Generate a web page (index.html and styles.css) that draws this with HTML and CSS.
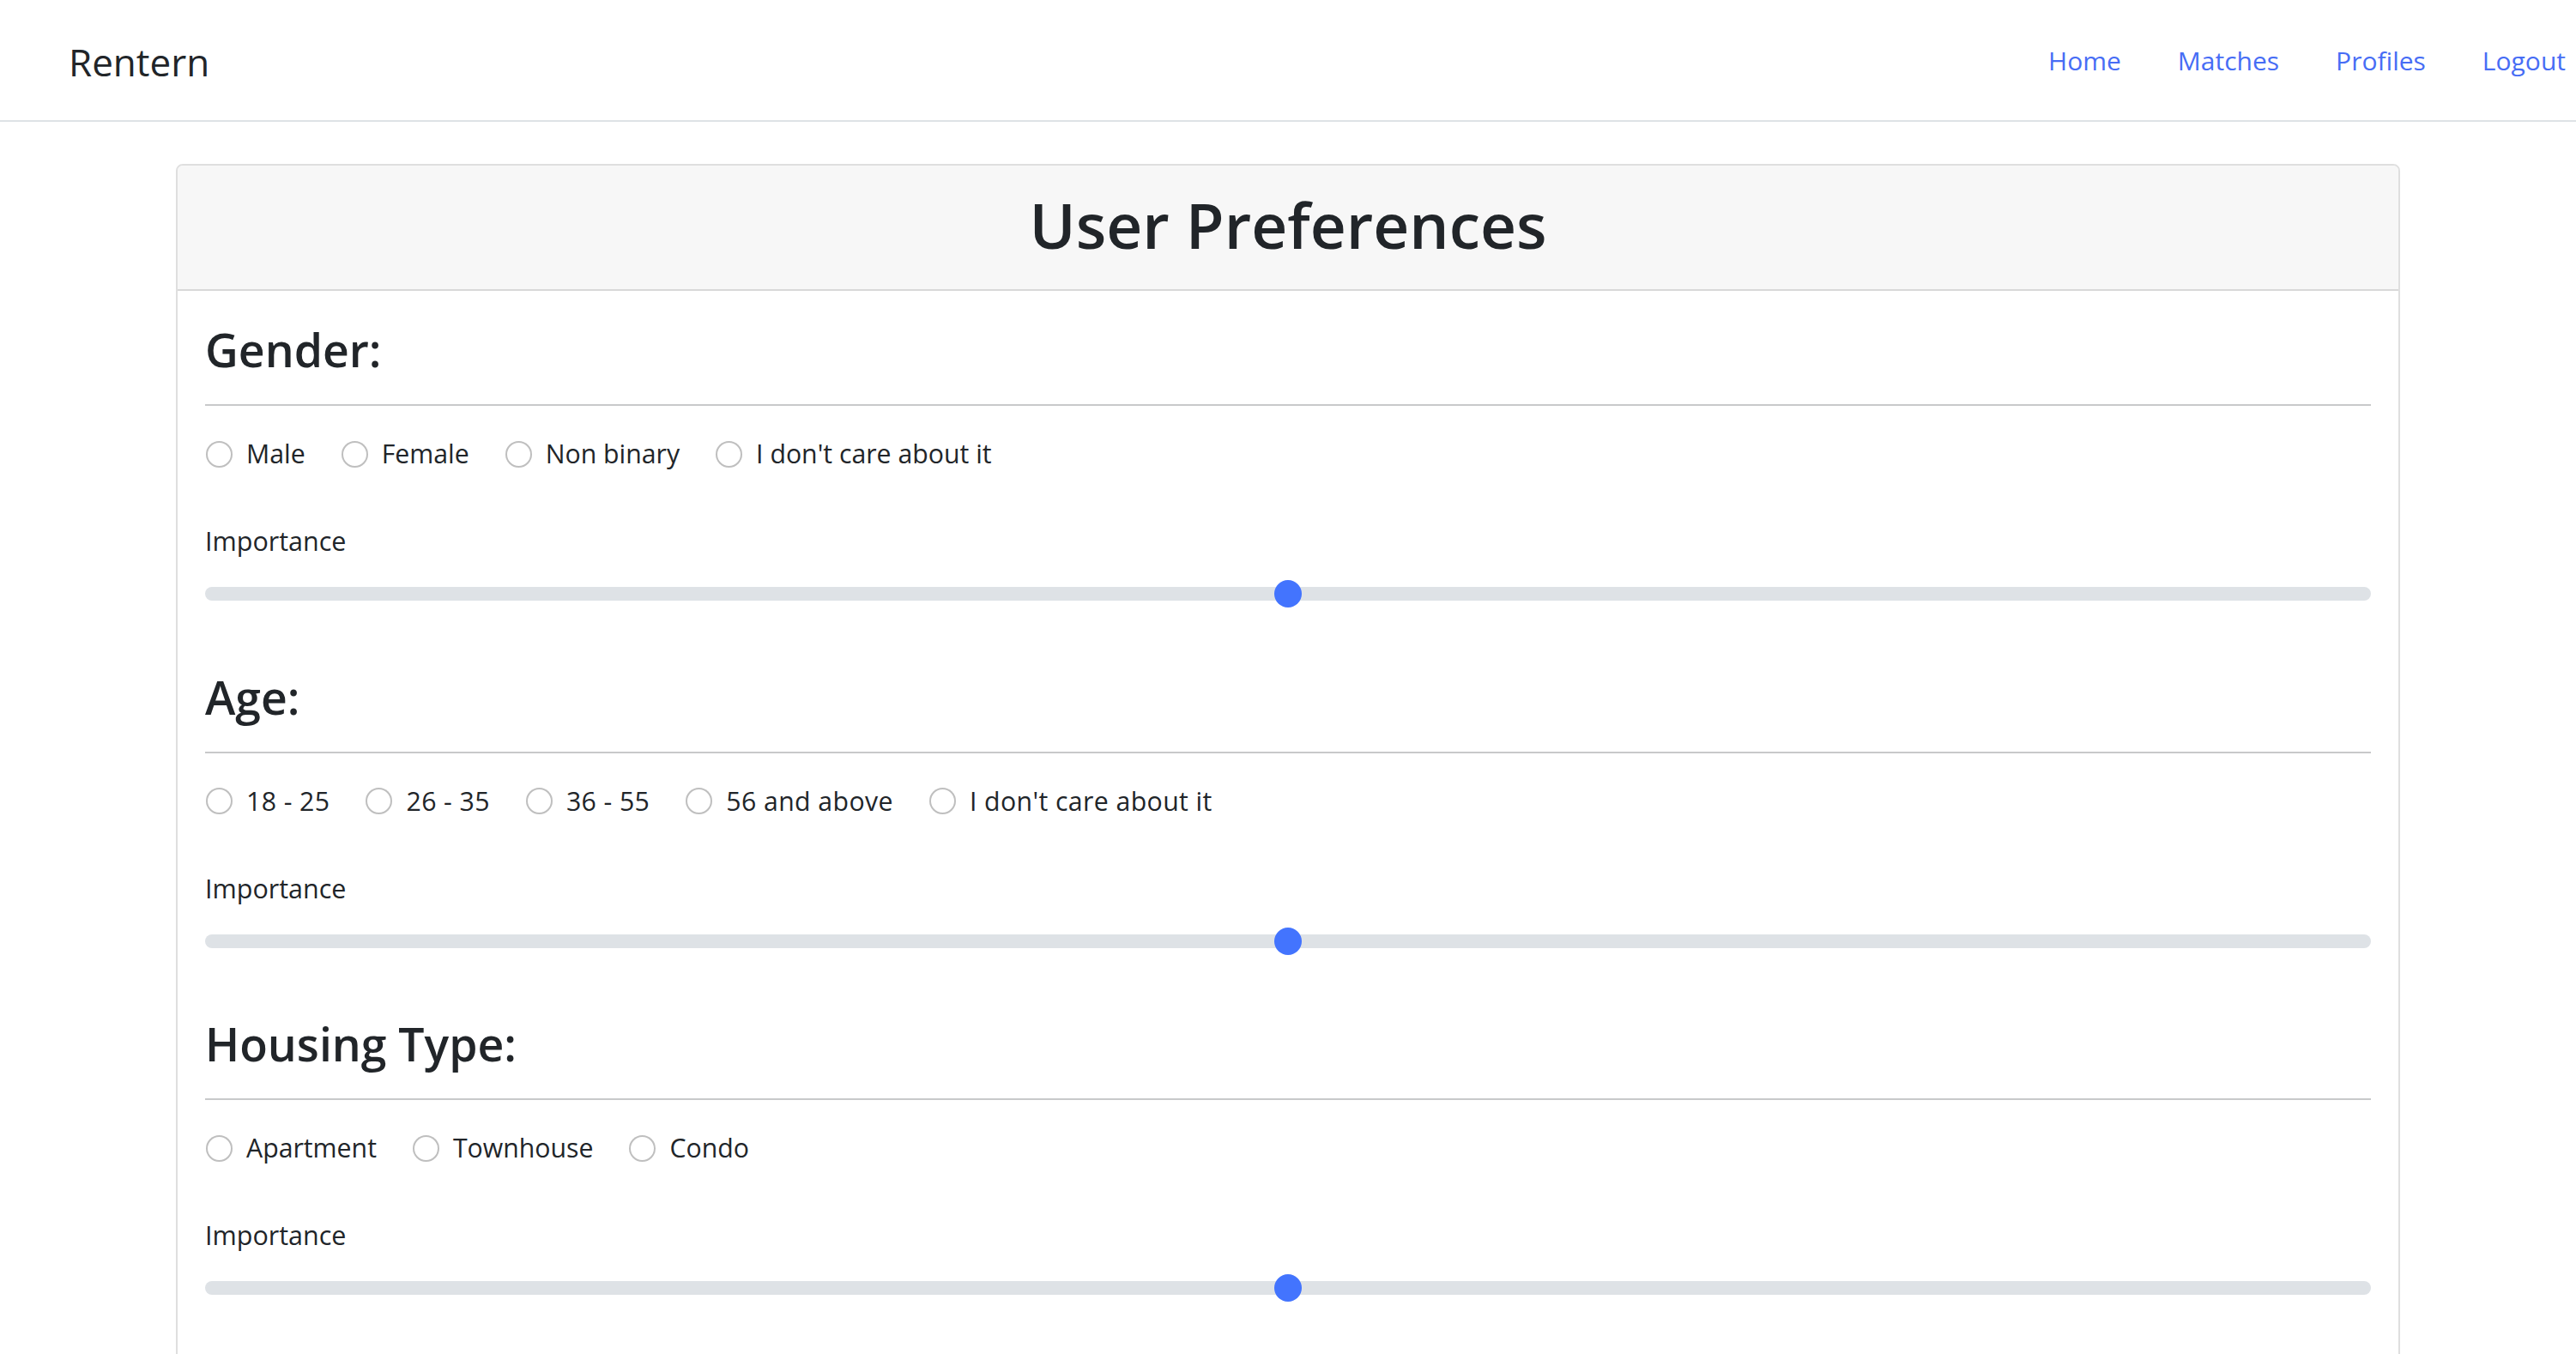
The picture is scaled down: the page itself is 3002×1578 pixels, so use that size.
FILE: index.html
```html
<!DOCTYPE html>
<html lang="en">
<head>
<meta charset="utf-8">
<title>Rentern - User Preferences</title>
<link rel="stylesheet" href="styles.css">
</head>
<body>
<nav class="navbar">
  <a class="brand" href="#">Rentern</a>
  <ul class="nav-links">
    <li><a href="#">Home</a></li>
    <li><a href="#">Matches</a></li>
    <li><a href="#">Profiles</a></li>
    <li><a href="#">Logout</a></li>
  </ul>
</nav>
<main class="container">
  <div class="card">
    <div class="card-header">
      <h1>User Preferences</h1>
    </div>
    <div class="card-body">
      <section class="pref">
        <h3>Gender:</h3>
        <hr>
        <div class="options">
          <label class="option"><input type="radio" name="gender"><span>Male</span></label>
          <label class="option"><input type="radio" name="gender"><span>Female</span></label>
          <label class="option"><input type="radio" name="gender"><span>Non binary</span></label>
          <label class="option"><input type="radio" name="gender"><span>I don't care about it</span></label>
        </div>
        <label class="importance" for="gender-importance">Importance</label>
        <input class="range" type="range" id="gender-importance" min="0" max="100" value="50">
      </section>
      <section class="pref">
        <h3>Age:</h3>
        <hr>
        <div class="options numeric">
          <label class="option"><input type="radio" name="age"><span>18 - 25</span></label>
          <label class="option"><input type="radio" name="age"><span>26 - 35</span></label>
          <label class="option"><input type="radio" name="age"><span>36 - 55</span></label>
          <label class="option"><input type="radio" name="age"><span>56 and above</span></label>
          <label class="option"><input type="radio" name="age"><span>I don't care about it</span></label>
        </div>
        <label class="importance" for="age-importance">Importance</label>
        <input class="range" type="range" id="age-importance" min="0" max="100" value="50">
      </section>
      <section class="pref">
        <h3>Housing Type:</h3>
        <hr>
        <div class="options">
          <label class="option"><input type="radio" name="housing"><span>Apartment</span></label>
          <label class="option"><input type="radio" name="housing"><span>Townhouse</span></label>
          <label class="option"><input type="radio" name="housing"><span>Condo</span></label>
        </div>
        <label class="importance" for="housing-importance">Importance</label>
        <input class="range" type="range" id="housing-importance" min="0" max="100" value="50">
      </section>
    </div>
  </div>
</main>
</body>
</html>
```

FILE: styles.css
```css
* {
  box-sizing: border-box;
}

html, body {
  margin: 0;
  padding: 0;
  background: #ffffff;
}

body {
  font-family: "Open Sans", "Noto Sans", sans-serif;
  color: #212529;
}

/* Navbar */
.navbar {
  height: 142px;
  border-bottom: 2px solid #dee2e6;
  display: flex;
  align-items: center;
  justify-content: space-between;
  padding: 0 12px 0 80px;
}

.brand {
  font-size: 44px;
  line-height: 60px;
  padding-top: 4px;
  color: #212529;
  text-decoration: none;
}

.nav-links {
  list-style: none;
  margin: 0;
  padding: 0;
  display: flex;
  gap: 66px;
}

.nav-links a {
  font-size: 30px;
  line-height: 45px;
  color: #476df5;
  text-decoration: none;
}

/* Container & card */
.container {
  width: 2640px;
  margin: 49px auto 0;
  padding: 0 24px;
}

.card {
  border: 2px solid rgba(0, 0, 0, 0.125);
  border-radius: 8px;
}

.card-header {
  background: #f7f7f7;
  border-bottom: 2px solid rgba(0, 0, 0, 0.125);
  border-radius: 6px 6px 0 0;
  padding: 21px 32px 27px;
}

.card-header h1 {
  margin: 0;
  font-size: 73px;
  font-weight: 600;
  line-height: 96px;
  text-align: center;
}

.card-body {
  padding: 35px 32px 32px;
}

/* Preference sections */
.pref h3 {
  margin: 0;
  font-size: 53.5px;
  font-weight: 600;
  line-height: 67px;
}

.pref hr {
  margin: 30px 0 32px;
  height: 0;
  border: 0;
  border-top: 2px solid #c8c9ca;
}

.options {
  display: flex;
  align-items: center;
  height: 48px;
  margin-bottom: 53px;
}

.option {
  display: flex;
  align-items: center;
  margin-right: 41px;
  font-size: 30.25px;
  line-height: 48px;
}

.numeric .option {
  letter-spacing: 0.4px;
}

.option input {
  appearance: none;
  -webkit-appearance: none;
  width: 31px;
  height: 31px;
  margin: 0 16px 0 1px;
  border: 2px solid rgba(0, 0, 0, 0.25);
  border-radius: 50%;
  background: #ffffff;
}

.importance {
  display: block;
  font-size: 30.5px;
  line-height: 48px;
  margin-bottom: 22px;
}

.range {
  display: block;
  width: 100%;
  height: 32px;
  margin: 0 0 70.5px;
  padding: 0;
  -webkit-appearance: none;
  appearance: none;
  background: transparent;
}

.range::-webkit-slider-runnable-track {
  height: 16px;
  background: #dee2e6;
  border-radius: 8px;
  border: 0;
}

.range::-webkit-slider-thumb {
  -webkit-appearance: none;
  appearance: none;
  width: 32px;
  height: 32px;
  margin-top: -8px;
  border: 0;
  border-radius: 50%;
  background: #4374fe;
}
```
